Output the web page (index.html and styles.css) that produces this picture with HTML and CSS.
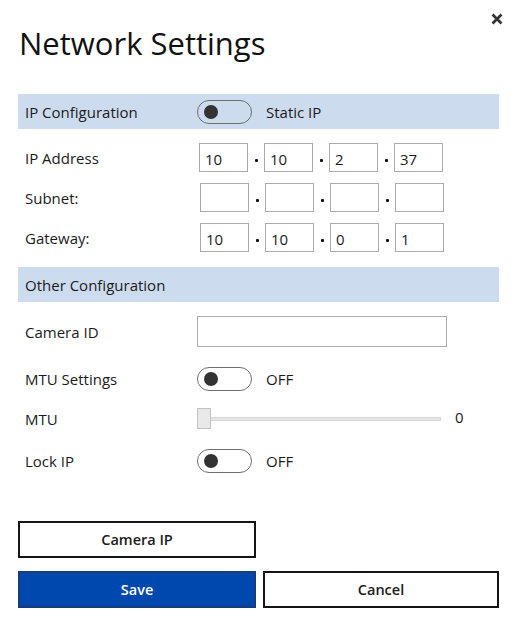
FILE: index.html
```html
<!DOCTYPE html>
<html lang="en">
<head>
<meta charset="utf-8">
<title>Network Settings</title>
<link rel="stylesheet" href="styles.css">
</head>
<body>
<div class="dialog">
  <div class="topbar">
    <button class="close" aria-label="Close">
      <svg width="12" height="12" viewBox="0 0 12 12"><path d="M1.5 1.5 L10.5 10.5 M10.5 1.5 L1.5 10.5" stroke="#333" stroke-width="2.7" stroke-linecap="butt" fill="none"/></svg>
    </button>
  </div>
  <h1 class="title">Network Settings</h1>

  <section class="section section-ip">
    <div class="section-head">
      <span class="head-label">IP Configuration</span>
      <div class="control">
        <span class="toggle"><span class="knob"></span></span>
        <span class="toggle-text">Static IP</span>
      </div>
    </div>
    <div class="rows rows-ip">
      <div class="row">
        <span class="label">IP Address</span>
        <div class="ip">
          <input class="octet" type="text" value="10"><span class="sep"><i></i></span>
          <input class="octet" type="text" value="10"><span class="sep"><i></i></span>
          <input class="octet" type="text" value="2"><span class="sep"><i></i></span>
          <input class="octet" type="text" value="37">
        </div>
      </div>
      <div class="row">
        <span class="label">Subnet:</span>
        <div class="ip ip-shift">
          <input class="octet" type="text" value=""><span class="sep"><i></i></span>
          <input class="octet" type="text" value=""><span class="sep"><i></i></span>
          <input class="octet" type="text" value=""><span class="sep"><i></i></span>
          <input class="octet" type="text" value="">
        </div>
      </div>
      <div class="row">
        <span class="label">Gateway:</span>
        <div class="ip ip-shift">
          <input class="octet" type="text" value="10"><span class="sep"><i></i></span>
          <input class="octet" type="text" value="10"><span class="sep"><i></i></span>
          <input class="octet" type="text" value="0"><span class="sep"><i></i></span>
          <input class="octet" type="text" value="1">
        </div>
      </div>
    </div>
  </section>

  <section class="section section-other">
    <div class="section-head">
      <span class="head-label">Other Configuration</span>
    </div>
    <div class="rows rows-other">
      <div class="row row-camera">
        <span class="label">Camera ID</span>
        <input class="text-input" type="text" value="">
      </div>
      <div class="row row-mtu">
        <span class="label">MTU Settings</span>
        <div class="control">
          <span class="toggle"><span class="knob"></span></span>
          <span class="toggle-text">OFF</span>
        </div>
      </div>
      <div class="row row-slider">
        <span class="label">MTU</span>
        <div class="slider">
          <span class="thumb"></span>
          <span class="track"></span>
          <span class="slider-value">0</span>
        </div>
      </div>
      <div class="row row-lock">
        <span class="label">Lock IP</span>
        <div class="control">
          <span class="toggle"><span class="knob"></span></span>
          <span class="toggle-text">OFF</span>
        </div>
      </div>
    </div>
  </section>

  <div class="actions">
    <button class="btn btn-camera">Camera IP</button>
    <span></span>
    <button class="btn btn-primary">Save</button>
    <button class="btn">Cancel</button>
  </div>
</div>
</body>
</html>
```

FILE: styles.css
```css
html, body {
  margin: 0;
  padding: 0;
  background: #ffffff;
}

body {
  font-family: "Open Sans", "Noto Sans", "Liberation Sans", sans-serif;
  color: #1b1b1b;
  font-size: 15px;
}

.dialog {
  width: 517px;
  box-sizing: border-box;
  padding: 0 18px;
}

.topbar {
  display: flex;
  justify-content: flex-end;
  padding-top: 13px;
  margin-right: -4px;
  height: 12px;
}

.close {
  width: 12px;
  height: 12px;
  padding: 0;
  border: 0;
  background: transparent;
  display: block;
  line-height: 0;
}

.title {
  margin: 0 0 0 1px;
  font-size: 31px;
  font-weight: 400;
  line-height: 37px;
  color: #111;
}

.section-ip {
  margin-top: 32px;
}

.section-head {
  display: grid;
  grid-template-columns: 172px 1fr;
  align-items: center;
  height: 35px;
  padding-left: 7px;
  background: #cddbef;
}

.head-label,
.label {
  font-size: 15px;
  line-height: 20px;
  color: #1b1b1b;
}

.control {
  display: flex;
  align-items: center;
  gap: 14px;
}

.toggle {
  box-sizing: border-box;
  width: 55px;
  height: 24px;
  border: 1px solid #6e6e6e;
  border-radius: 12px;
  display: flex;
  align-items: center;
  padding-left: 6px;
}

.knob {
  width: 14px;
  height: 14px;
  border-radius: 50%;
  background: #333333;
}

.toggle-text {
  font-size: 15px;
  line-height: 20px;
}

.rows {
  display: flex;
  flex-direction: column;
}

.rows-ip {
  padding-top: 14px;
  padding-bottom: 15px;
  gap: 11px;
}

.row {
  display: grid;
  grid-template-columns: 172px 1fr;
  align-items: center;
  padding-left: 7px;
}

.ip {
  display: flex;
  align-items: center;
  margin-left: 2px;
}

.ip-shift {
  margin-left: 3px;
}

.octet {
  box-sizing: border-box;
  width: 49px;
  height: 29px;
  margin: 0;
  padding: 2px 5px 0;
  border: 1px solid #ababab;
  border-radius: 0;
  font-family: "Open Sans", "Noto Sans", "Liberation Sans", sans-serif;
  font-size: 15px;
  color: #1b1b1b;
  background: #fff;
  outline: none;
}

.sep {
  width: 16px;
  display: flex;
  justify-content: center;
  padding-top: 6px;
}

.sep i {
  display: block;
  width: 3px;
  height: 3px;
  border-radius: 1px;
  background: #111;
}

.rows-other {
  padding-top: 14px;
}

.text-input {
  box-sizing: border-box;
  width: 250px;
  height: 31px;
  margin: 0;
  padding: 0 6px;
  border: 1px solid #ababab;
  border-radius: 0;
  font-family: "Open Sans", "Noto Sans", "Liberation Sans", sans-serif;
  font-size: 15px;
  background: #fff;
  outline: none;
}

.row-mtu {
  margin-top: 20px;
}

.row-slider {
  margin-top: 17px;
}

.row-lock {
  margin-top: 20px;
}

.slider {
  display: flex;
  align-items: center;
}

.thumb {
  box-sizing: border-box;
  width: 14px;
  height: 21px;
  background: #e9e9e9;
  border: 1px solid #c2c2c2;
}

.track {
  box-sizing: border-box;
  width: 230px;
  height: 4px;
  background: #e4e4e4;
  border: 1px solid #d6d6d6;
  border-left: 0;
}

.slider-value {
  margin-left: 14px;
  font-size: 15px;
  line-height: 20px;
  margin-top: -3px;
}

.actions {
  display: grid;
  grid-template-columns: 1fr 1fr;
  column-gap: 7px;
  row-gap: 13px;
  margin-top: 48px;
}

.btn {
  box-sizing: border-box;
  height: 37px;
  margin: 0;
  padding: 0;
  border: 2px solid #151515;
  border-radius: 0;
  background: #fff;
  font-family: "Open Sans", "Noto Sans", "Liberation Sans", sans-serif;
  font-size: 14.5px;
  font-weight: 600;
  color: #1b1b1b;
}

.btn-camera {
  width: 238px;
}

.btn-primary {
  background: #0048ad;
  border-color: #163d7a;
  color: #ffffff;
}
```
